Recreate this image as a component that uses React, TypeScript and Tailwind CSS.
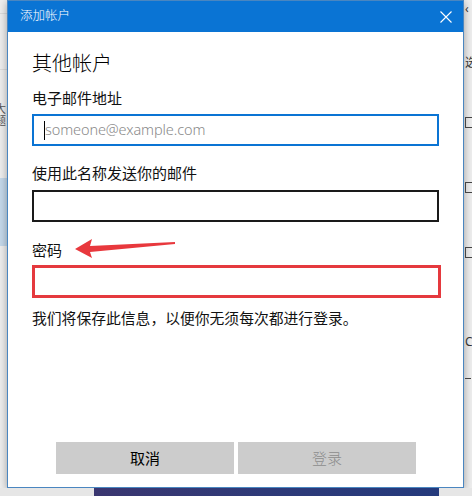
import React from 'react';

const font = { fontFamily: '"Noto Sans", "Noto Sans CJK SC", sans-serif' };

const App: React.FC = () => {
  return (
    <div className="w-[472px] h-[496px] bg-[#eeeeee] overflow-hidden flex flex-col" style={font}>
      <div className="flex h-[488px]">
        {/* left backdrop sliver */}
        <div className="w-[7px] flex flex-col text-[11px] leading-[12px] text-[#555] overflow-hidden">
          <div className="h-[14px] shrink-0 border-b border-[#dcdcdc]"></div>
          <div className="h-[56px] shrink-0 border-b border-[#dcdcdc]"></div>
          <div className="h-[33px] shrink-0"></div>
          <div className="h-[12px] shrink-0 -ml-[5px] whitespace-nowrap">大</div>
          <div className="h-[12px] shrink-0 -ml-[5px] whitespace-nowrap">题</div>
          <div className="h-[51px] shrink-0"></div>
          <div className="h-[68px] shrink-0 bg-[#c4d8ea]"></div>
          <div className="flex-1"></div>
        </div>

        {/* dialog */}
        <div className="w-[457px] h-[488px] flex flex-col bg-white border border-[#4a86c0] shadow-[0_2px_8px_rgba(0,0,0,0.35)]">
          <div className="h-[31px] bg-[#0a74d4] flex items-center justify-between pl-[12px] pr-[10px] text-white">
            <span className="text-[12.5px] font-light">添加帐户</span>
            <svg width="12" height="12" viewBox="0 0 12 12" className="mr-[1px]">
              <path d="M0.5 0.5 L11.5 11.5 M11.5 0.5 L0.5 11.5" stroke="white" strokeWidth="1.1" fill="none" />
            </svg>
          </div>

          <div className="relative flex-1 flex flex-col pl-[24px] pr-[24px]">
            <div className="mt-[18px] h-[28px] flex items-center text-[20px] font-light text-black">其他帐户</div>

            <div className="mt-[10px] h-[20px] flex items-center text-[15px] text-[#111]">电子邮件地址</div>
            <div className="mt-[6px] w-[407px] h-[32px] border-2 border-[#0a74d4] flex items-center pl-[10px]">
              <span className="w-px h-[19px] bg-black"></span>
              <span className="text-[14.5px] font-light text-[#8a8a8a] tracking-[-0.1px]">someone@example.com</span>
            </div>

            <div className="mt-[17px] h-[20px] flex items-center text-[15px] text-[#111]">使用此名称发送你的邮件</div>
            <div className="mt-[7px] w-[407px] h-[32px] border-2 border-[#1a1a1a]"></div>

            <div className="mt-[18px] h-[20px] flex items-center text-[15px] text-[#111]">密码</div>
            <div className="mt-[5px] w-[409px] h-[33px] border-[3px] border-[#e5393e]"></div>

            <div className="mt-[10px] h-[20px] flex items-center text-[14.8px] text-[#111] whitespace-nowrap">
              我们将保存此信息，以便你无须每次都进行登录。
            </div>

            <div className="flex-1"></div>

            <div className="flex gap-[4px] pl-[24px] mb-[13px]">
              <button className="w-[178px] h-[32px] bg-[#cccccc] text-[15px] font-normal text-black">取消</button>
              <button className="w-[178px] h-[32px] bg-[#cccccc] text-[15px] font-light text-[#8c8c8c]">登录</button>
            </div>

            {/* red annotation arrow */}
            <svg className="absolute left-[59px] top-[205px]" width="112" height="22" viewBox="0 0 112 22">
              <path d="M8 12 L25 2 L23 9 L108 5 L108 7 L23 15 L25 21 Z" fill="#e8383d" />
            </svg>
          </div>
        </div>

        {/* right backdrop sliver */}
        <div className="w-[8px] flex flex-col text-[12px] leading-none text-[#333] overflow-hidden pl-[1px]">
          <div className="mt-[3px]">‹</div>
          <div className="mt-[42px]">选</div>
          <div className="mt-[48px] w-[8px] h-[11px] border border-[#444]"></div>
          <div className="mt-[54px] w-[8px] h-[11px] border border-[#444]"></div>
          <div className="mt-[54px] w-[8px] h-[11px] border border-[#444]"></div>
          <div className="mt-[78px]">C</div>
          <div className="mt-[30px] w-[6px] h-px bg-[#444]"></div>
        </div>
      </div>

      <div className="flex h-[8px]">
        <div className="w-[94px] bg-[#e6e6e6]"></div>
        <div className="w-[345px] bg-gradient-to-r from-[#3a3670] via-[#2e3a78] to-[#243a7c]"></div>
        <div className="flex-1 bg-[#e6e6e6]"></div>
      </div>
    </div>
  );
};

export default App;
